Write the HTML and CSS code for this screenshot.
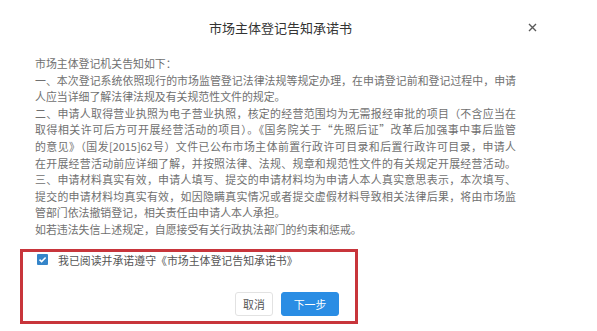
FILE: index.html
```html
<!DOCTYPE html>
<html lang="zh-CN">
<head>
<meta charset="utf-8">
<title>市场主体登记告知承诺书</title>
<link rel="stylesheet" href="styles.css">
</head>
<body>
<div class="dialog">
  <div class="header">
    <div class="title">市场主体登记告知承诺书</div>
    <button class="close" aria-label="关闭">
      <svg width="9" height="9" viewBox="0 0 9 9"><path d="M1 1L8 8M8 1L1 8" stroke="#5a5a5a" stroke-width="1.4" fill="none"/></svg>
    </button>
  </div>
  <div class="content">
    <div class="line">市场主体登记机关告知如下：</div>
    <div class="line full">一、本次登记系统依照现行的市场监管登记法律法规等规定办理，在申请登记前和登记过程中，申请</div>
    <div class="line">人应当详细了解法律法规及有关规范性文件的规定。</div>
    <div class="line full">二、申请人取得营业执照为电子营业执照，核定的经营范围均为无需报经审批的项目（不含应当在</div>
    <div class="line full">取得相关许可后方可开展经营活动的项目）。《国务院关于“先照后证”改革后加强事中事后监管</div>
    <div class="line full">的意见》（国发[2015]62号）文件已公布市场主体前置行政许可目录和后置行政许可目录，申请人</div>
    <div class="line full">在开展经营活动前应详细了解，并按照法律、法规、规章和规范性文件的有关规定开展经营活动。</div>
    <div class="line full">三、申请材料真实有效，申请人填写、提交的申请材料均为申请人本人真实意思表示，本次填写、</div>
    <div class="line full">提交的申请材料均真实有效，如因隐瞒真实情况或者提交虚假材料导致相关法律后果，将由市场监</div>
    <div class="line">管部门依法撤销登记，相关责任由申请人本人承担。</div>
    <div class="line">如若违法失信上述规定，自愿接受有关行政执法部门的约束和惩戒。</div>
  </div>
  <div class="footer">
    <label class="agree">
      <span class="checkbox">
        <svg width="11" height="11" viewBox="0 0 11 11"><path d="M2.5 5.6L4.6 7.6L8.6 3.4" stroke="#fff" stroke-width="1.5" fill="none"/></svg>
      </span>
      <span>我已阅读并承诺遵守《市场主体登记告知承诺书》</span>
    </label>
    <div class="actions">
      <button class="btn btn-default">取消</button>
      <button class="btn btn-primary">下一步</button>
    </div>
  </div>
</div>
</body>
</html>
```

FILE: styles.css
```css
html, body {
  margin: 0;
  padding: 0;
  background: #ffffff;
}
body {
  width: 597px;
  height: 331px;
  overflow: hidden;
  font-family: "Noto Sans CJK SC", "Noto Sans", sans-serif;
}
.dialog {
  display: flex;
  flex-direction: column;
}
.header {
  height: 55px;
  display: flex;
  align-items: center;
  padding-left: 209px;
  padding-right: 60px;
}
.title {
  font-size: 13px;
  color: #333;
}
.close {
  margin-left: auto;
  border: none;
  background: none;
  padding: 0;
  width: 9px;
  height: 9px;
  display: flex;
}
.content {
  padding-left: 35px;
  width: 481px;
  font-size: 10.9px;
  line-height: 16.6px;
  color: #707070;
}
.line {
  white-space: nowrap;
}
.line.full {
  text-align: justify;
  text-align-last: justify;
}
.footer {
  box-sizing: border-box;
  margin-top: 11px;
  margin-left: 20px;
  width: 338px;
  height: 75px;
  border: 3px solid #c8353b;
  padding: 0 0 0 14px;
  display: flex;
  flex-direction: column;
}
.agree {
  display: flex;
  align-items: center;
  gap: 10px;
  height: 16px;
  font-size: 10.9px;
  color: #555;
}
.checkbox {
  width: 11px;
  height: 11px;
  background: #3585c9;
  border-radius: 1px;
  display: flex;
}
.actions {
  margin-top: 24px;
  display: flex;
  justify-content: flex-end;
  gap: 8px;
  padding-right: 16px;
}
.btn {
  height: 24px;
  font-family: "Noto Sans CJK SC", "Noto Sans", sans-serif;
  font-size: 10.9px;
  border-radius: 3px;
  padding: 0;
  cursor: pointer;
}
.btn-default {
  width: 38px;
  background: #fff;
  border: 1px solid #e2e2e2;
  color: #555;
}
.btn-primary {
  width: 58px;
  background: #2a8de4;
  border: 1px solid #2a8de4;
  color: #fff;
}
```
